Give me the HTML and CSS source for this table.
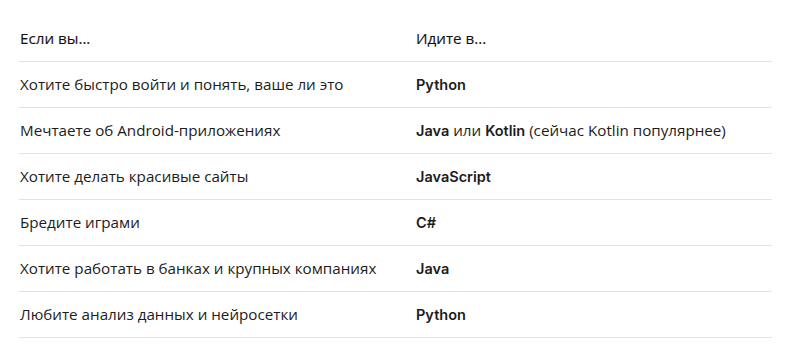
FILE: index.html
```html
<!DOCTYPE html>
<html lang="ru">
<head>
<meta charset="utf-8">
<link rel="stylesheet" href="styles.css">
</head>
<body>
<div class="wrap">
<table class="tbl">
<thead>
<tr><th class="c1">Если вы...</th><th>Идите в...</th></tr>
</thead>
<tbody>
<tr><td class="c1">Хотите быстро войти и понять, ваше ли это</td><td><b>Python</b></td></tr>
<tr><td class="c1">Мечтаете об Android-приложениях</td><td><b>Java</b> или <b>Kotlin</b> (сейчас Kotlin популярнее)</td></tr>
<tr><td class="c1">Хотите делать красивые сайты</td><td><b>JavaScript</b></td></tr>
<tr><td class="c1">Бредите играми</td><td><b>C#</b></td></tr>
<tr><td class="c1">Хотите работать в банках и крупных компаниях</td><td><b>Java</b></td></tr>
<tr><td class="c1">Любите анализ данных и нейросетки</td><td><b>Python</b></td></tr>
</tbody>
</table>
</div>
</body>
</html>
```
FILE: styles.css
```css
html, body { margin: 0; padding: 0; background: #fff; }
body { font-family: "Open Sans", sans-serif; font-size: 15.2px; color: #1c1c1c; }
.wrap { padding: 16px 19px 0 19px; }
.tbl { width: 753px; border-collapse: collapse; table-layout: fixed; }
.tbl th, .tbl td { text-align: left; padding: 11px 0 12px 0; line-height: 22px; border-bottom: 1px solid #e3e3e3; font-weight: 400; vertical-align: middle; }
.tbl th { font-weight: 400; color: #111; -webkit-text-stroke: 0.12px #111; }
.tbl .c1 { width: 396px; padding-left: 1px; }
.tbl b { font-family: Inter, sans-serif; font-weight: 600; font-size: 14.5px; line-height: 1; }
```
